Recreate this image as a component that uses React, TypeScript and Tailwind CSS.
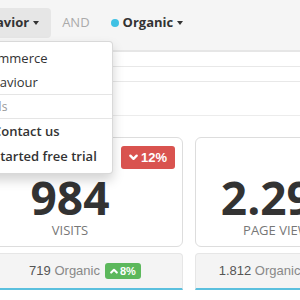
import type { ReactNode } from 'react'

const SANS = "font-['Open_Sans',sans-serif]"
const ARIAL = "font-['Liberation_Sans',Arial,sans-serif]"

function Caret() {
  return <span className="inline-block w-0 h-0 border-x-[3.5px] border-x-transparent border-t-[4px] border-t-[#333]" />
}

function Chevron({ up, size = 9 }: { up?: boolean; size?: number }) {
  return (
    <svg width={size} height={size} viewBox="0 0 10 10" fill="none" stroke="currentColor" strokeWidth="2.6" strokeLinecap="round" strokeLinejoin="round">
      {up ? <polyline points="1.5,7 5,3.5 8.5,7" /> : <polyline points="1.5,3 5,6.5 8.5,3" />}
    </svg>
  )
}

function Card({ width, value, label, badge, footer }: { width: string; value: string; label: string; badge?: ReactNode; footer: ReactNode }) {
  return (
    <div className={`flex flex-col shrink-0 ${width}`}>
      <div className="relative h-[110px] border border-[#dddddd] rounded-[6px] bg-white text-center pt-[36px]">
        {badge}
        <p className={`${SANS} text-[46px] leading-[46px] font-bold text-[#333]`}>{value}</p>
        <p className={`${SANS} text-[13px] leading-[20px] text-[#777] uppercase`}>{label}</p>
      </div>
      <div className="mt-[6px] h-[37px] bg-[#f4f4f4] border border-[#e6e6e6] border-b-2 border-b-[#5bc0de] rounded-t-[4px] flex items-center justify-center">
        {footer}
      </div>
    </div>
  )
}

export default function App() {
  return (
    <div className="relative w-[300px] h-[300px] overflow-hidden bg-white">
      {/* filter bar */}
      <div className="h-[52px] bg-[#f5f5f5] border-b-2 border-[#e6e6e6] flex items-start pt-[8px]">
        <div className={`${SANS} flex items-center text-[13px] ml-[-41px]`}>
          <button className="h-[30px] flex items-center gap-[4px] pl-[12px] pr-[12px] rounded-[4px] bg-[#e6e6e6] font-bold text-[#333]">
            Behavior <Caret />
          </button>
          <span className="px-[11px] text-[#aaa]">AND</span>
          <button className="h-[30px] flex items-center gap-[4px] pl-[10px] pr-[12px] font-bold text-[#333]">
            <span className="w-[8px] h-[8px] rounded-full bg-[#3fc1e4]" />
            Organic <Caret />
          </button>
        </div>
      </div>

      {/* empty rows */}
      <div className="h-[15px] border-b border-[#e8e8e8]" />
      <div className="h-[15px] border-b border-[#e8e8e8]" />
      <div className="h-[34px] border-b border-[#ececec]" />

      {/* cards */}
      <div className="flex gap-[12px] ml-[-43px] mt-[21px]">
        <Card
          width="w-[226px]"
          value="984"
          label="Visits"
          badge={
            <span className={`${ARIAL} absolute top-[8px] right-[7px] h-[23px] px-[8px] flex items-center gap-[3px] rounded-[3px] bg-[#d9534f] text-white text-[13px] font-bold`}>
              <Chevron /> 12%
            </span>
          }
          footer={
            <div className={`${ARIAL} pl-[30px] flex items-center gap-[5px] text-[13px]`}>
              <span><span className="text-[#555]">719</span> <span className="text-[#888]">Organic</span></span>
              <span className="h-[16px] px-[5px] flex items-center gap-[2px] rounded-[3px] bg-[#5cb85c] text-white text-[11px] font-bold">
                <Chevron up size={8} /> 8%
              </span>
            </div>
          }
        />
        <Card
          width="w-[170px]"
          value="2.293"
          label="Page views"
          footer={
            <div className={`${ARIAL} flex items-center gap-[5px] text-[13px] whitespace-nowrap`}>
              <span><span className="text-[#555]">1.812</span> <span className="text-[#888]">Organic</span></span>
              <span className="h-[16px] px-[5px] flex items-center gap-[2px] rounded-[3px] bg-[#5cb85c] text-white text-[11px] font-bold">
                <Chevron up size={8} /> 4%
              </span>
            </div>
          }
        />
      </div>

      {/* open dropdown */}
      <div className={`${SANS} absolute left-[-45px] top-[41px] w-[158px] bg-white border border-[rgba(0,0,0,0.15)] rounded-[4px] shadow-[0_6px_12px_rgba(0,0,0,0.175)] py-[4px] text-[13px] text-[#333]`}>
        <div className="h-[24px] leading-[24px] px-[20px]">Ecommerce</div>
        <div className="h-[24px] leading-[24px] px-[20px]">Behaviour</div>
        <div className="h-px bg-[#e5e5e5]" />
        <div className="h-[23px] leading-[23px] px-[20px] text-[12px] text-[#999]">Goals</div>
        <div className="h-px bg-[#e5e5e5]" />
        <div className="h-[25px] leading-[25px] pl-[37px] font-semibold whitespace-nowrap">Contact us</div>
        <div className="h-[25px] leading-[25px] pl-[37px] font-semibold whitespace-nowrap">Started free trial</div>
      </div>
    </div>
  )
}
